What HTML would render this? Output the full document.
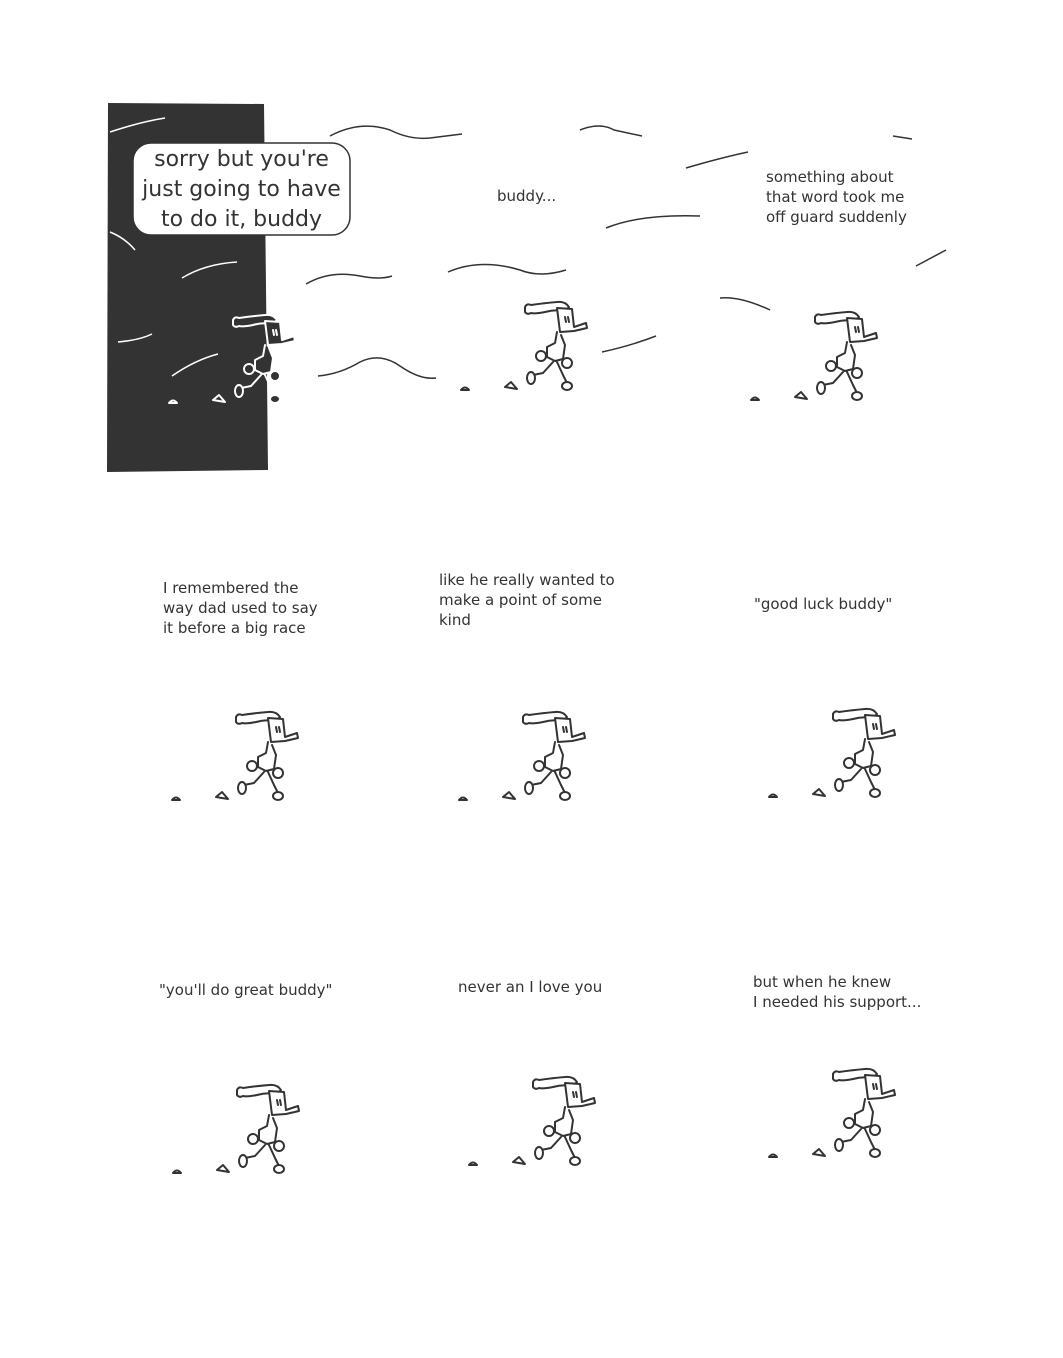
<!DOCTYPE html>
<html><head><meta charset="utf-8"><style>
html,body{margin:0;padding:0;background:#fff}
body{width:1063px;height:1358px;position:relative;overflow:hidden;font-family:"DejaVu Sans","Liberation Sans",sans-serif;color:#333}
.t{position:absolute;font-size:15px;line-height:20px;white-space:nowrap}
svg{position:absolute;left:0;top:0}
</style></head><body>
<svg width="1063" height="1358" viewBox="0 0 1063 1358">
<defs>
<g id="r" style="fill:var(--f,#fff)" stroke-width="2" stroke-linejoin="round" stroke-linecap="round">
 <path d="M0 2 Q2 -2 6 0 Q20 -2 32 -3 Q40 -4 44 2 L40 6 Q30 4 20 7 Q10 9 6 8 Q2 10 0 7 Z"/>
 <path d="M32 3 L47 4 L49 22 L61 18 L62 23 L49 26 L35 27 Z"/>
 <path d="M40 12 L41 17 M43 12 L44 17" fill="none"/>
 <path d="M32 27 L30 38 L22 42 L22 52 L30 56 L38 54 L40 40 L36 30"/>
 <path d="M28 57 L18 68 L8 70 M32 57 L38 70 L42 78" fill="none"/>
 <ellipse cx="6" cy="73" rx="4" ry="6"/>
 <ellipse cx="42" cy="81" rx="5" ry="4"/>
 <circle cx="16" cy="51" r="5"/>
 <circle cx="42" cy="58" r="5"/>
 <path d="M-64 85 Q-60 80 -56 85 Z"/>
 <path d="M-20 82 L-14 77 L-8 84 Z"/>
</g>
</defs>
<polygon points="108,103 264,104 268,470 107,472" fill="#333"/>
<g fill="none" stroke="#333" stroke-width="1.5">
 <path d="M330 136 Q360 120 390 130 Q410 140 430 138 L462 134"/>
 <path d="M580 130 Q600 122 614 130 L642 136"/>
 <path d="M686 168 Q720 158 748 152"/>
 <path d="M893 136 L912 139"/>
 <path d="M606 228 Q640 214 700 216"/>
 <path d="M306 284 Q330 270 360 276 Q380 280 392 276"/>
 <path d="M448 272 Q480 258 520 270 Q540 278 566 270"/>
 <path d="M318 376 Q340 374 360 362 Q380 352 400 366 Q420 380 436 378"/>
 <path d="M602 352 Q630 346 656 336"/>
 <path d="M720 298 Q740 296 770 310"/>
 <path d="M916 266 L946 250"/>
</g>
<g fill="none" stroke="#fff" stroke-width="1.5">
 <path d="M110 132 Q140 122 165 118"/>
 <path d="M110 232 Q125 238 135 250"/>
 <path d="M182 278 Q205 264 237 262"/>
 <path d="M118 342 Q140 340 152 334"/>
 <path d="M172 376 Q195 360 218 354"/>
</g>
<use href="#r" x="233" y="318" stroke="#fff" style="--f:#333"/>
<g stroke="#333">
<use href="#r" x="525" y="305"/>
<use href="#r" x="815" y="315"/>
<use href="#r" x="236" y="715"/>
<use href="#r" x="523" y="715"/>
<use href="#r" x="833" y="712"/>
<use href="#r" x="237" y="1088"/>
<use href="#r" x="533" y="1080"/>
<use href="#r" x="833" y="1072"/>
</g>
<rect x="133" y="143" width="217" height="92" rx="18" fill="#fff" stroke="#333" stroke-width="1.5"/>
</svg>
<div class="t" style="left:133px;top:145px;width:217px;text-align:center;font-size:22px;line-height:30px">sorry but you're<br>just going to have<br>to do it, buddy</div>
<div class="t" style="left:497px;top:186px">buddy...</div>
<div class="t" style="left:766px;top:167px">something about<br>that word took me<br>off guard suddenly</div>
<div class="t" style="left:163px;top:578px">I remembered the<br>way dad used to say<br>it before a big race</div>
<div class="t" style="left:439px;top:570px">like he really wanted to<br>make a point of some<br>kind</div>
<div class="t" style="left:754px;top:594px">"good luck buddy"</div>
<div class="t" style="left:159px;top:980px">"you'll do great buddy"</div>
<div class="t" style="left:458px;top:977px">never an I love you</div>
<div class="t" style="left:753px;top:972px">but when he knew<br>I needed his support...</div>
</body></html>
